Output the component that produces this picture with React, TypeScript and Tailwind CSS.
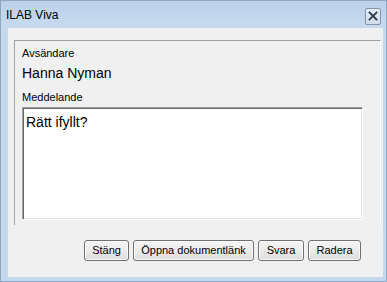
import React from "react";

const font = { fontFamily: '"Liberation Sans", Arial, sans-serif' };

function Btn({ label, w }: { label: string; w: string }) {
  return (
    <div
      className={`${w} h-[21px] flex items-center justify-center rounded-[3px] border border-[#707070] bg-gradient-to-b from-[#f4f4f4] via-[#ececec] to-[#dcdcdc] text-[11px] text-black shadow-[inset_0_0_0_1px_#fbfbfb]`}
    >
      {label}
    </div>
  );
}

export default function App() {
  return (
    <div
      className="w-[387px] h-[282px] bg-[#c5d9ee] border border-[#8fa7c3] flex flex-col"
      style={font}
    >
      <div className="h-[27px] flex items-center justify-between pl-[5px] pr-[5px] bg-gradient-to-b from-[#bcd2ea] to-[#c6daef]">
        <span className="text-[12px] text-black pt-[1px]">ILAB Viva</span>
        <div className="w-[16px] h-[17px] mt-[3px] border border-[#8594a8] rounded-[2px] bg-gradient-to-b from-[#e6eef8] to-[#cfdcec] flex items-center justify-center">
          <svg width="10" height="10" viewBox="0 0 10 10">
            <path d="M1.5 1.5 L8.5 8.5 M8.5 1.5 L1.5 8.5" stroke="#2f3b4b" strokeWidth="1.8" strokeLinecap="square" />
          </svg>
        </div>
      </div>
      <div className="ml-[7px] mr-[3px] h-[249px] bg-[#f0f0f0] flex flex-col pl-[6px] pr-[2px] pt-[12px]">
        <div className="h-[185px] border-t border-l border-t-[#a0a0a0] border-l-[#a0a0a0] border-r border-r-white flex flex-col pl-[7px] pr-[17px]">
          <div className="mt-[5px] h-[14px] text-[11px] text-black leading-[14px]">Avsändare</div>
          <div className="mt-[5px] h-[17px] text-[14px] text-black leading-[17px]">Hanna Nyman</div>
          <div className="mt-[8px] h-[14px] text-[11px] text-black leading-[14px]">Meddelande</div>
          <div className="mt-[3px] h-[113px] bg-white border-t border-l border-t-[#a0a0a0] border-l-[#a0a0a0] border-r border-b border-r-white border-b-white shadow-[inset_1px_1px_0_#696969,inset_-1px_-1px_0_#e3e3e3] pl-[3px] pt-[2px]">
            <span className="text-[14px] text-black leading-[17px]">Rätt ifyllt?</span>
          </div>
        </div>
        <div className="mt-[15px] flex justify-end gap-[4px] pr-[20px]">
          <Btn label="Stäng" w="w-[45px]" />
          <Btn label="Öppna dokumentlänk" w="w-[121px]" />
          <Btn label="Svara" w="w-[46px]" />
          <Btn label="Radera" w="w-[53px]" />
        </div>
      </div>
    </div>
  );
}
